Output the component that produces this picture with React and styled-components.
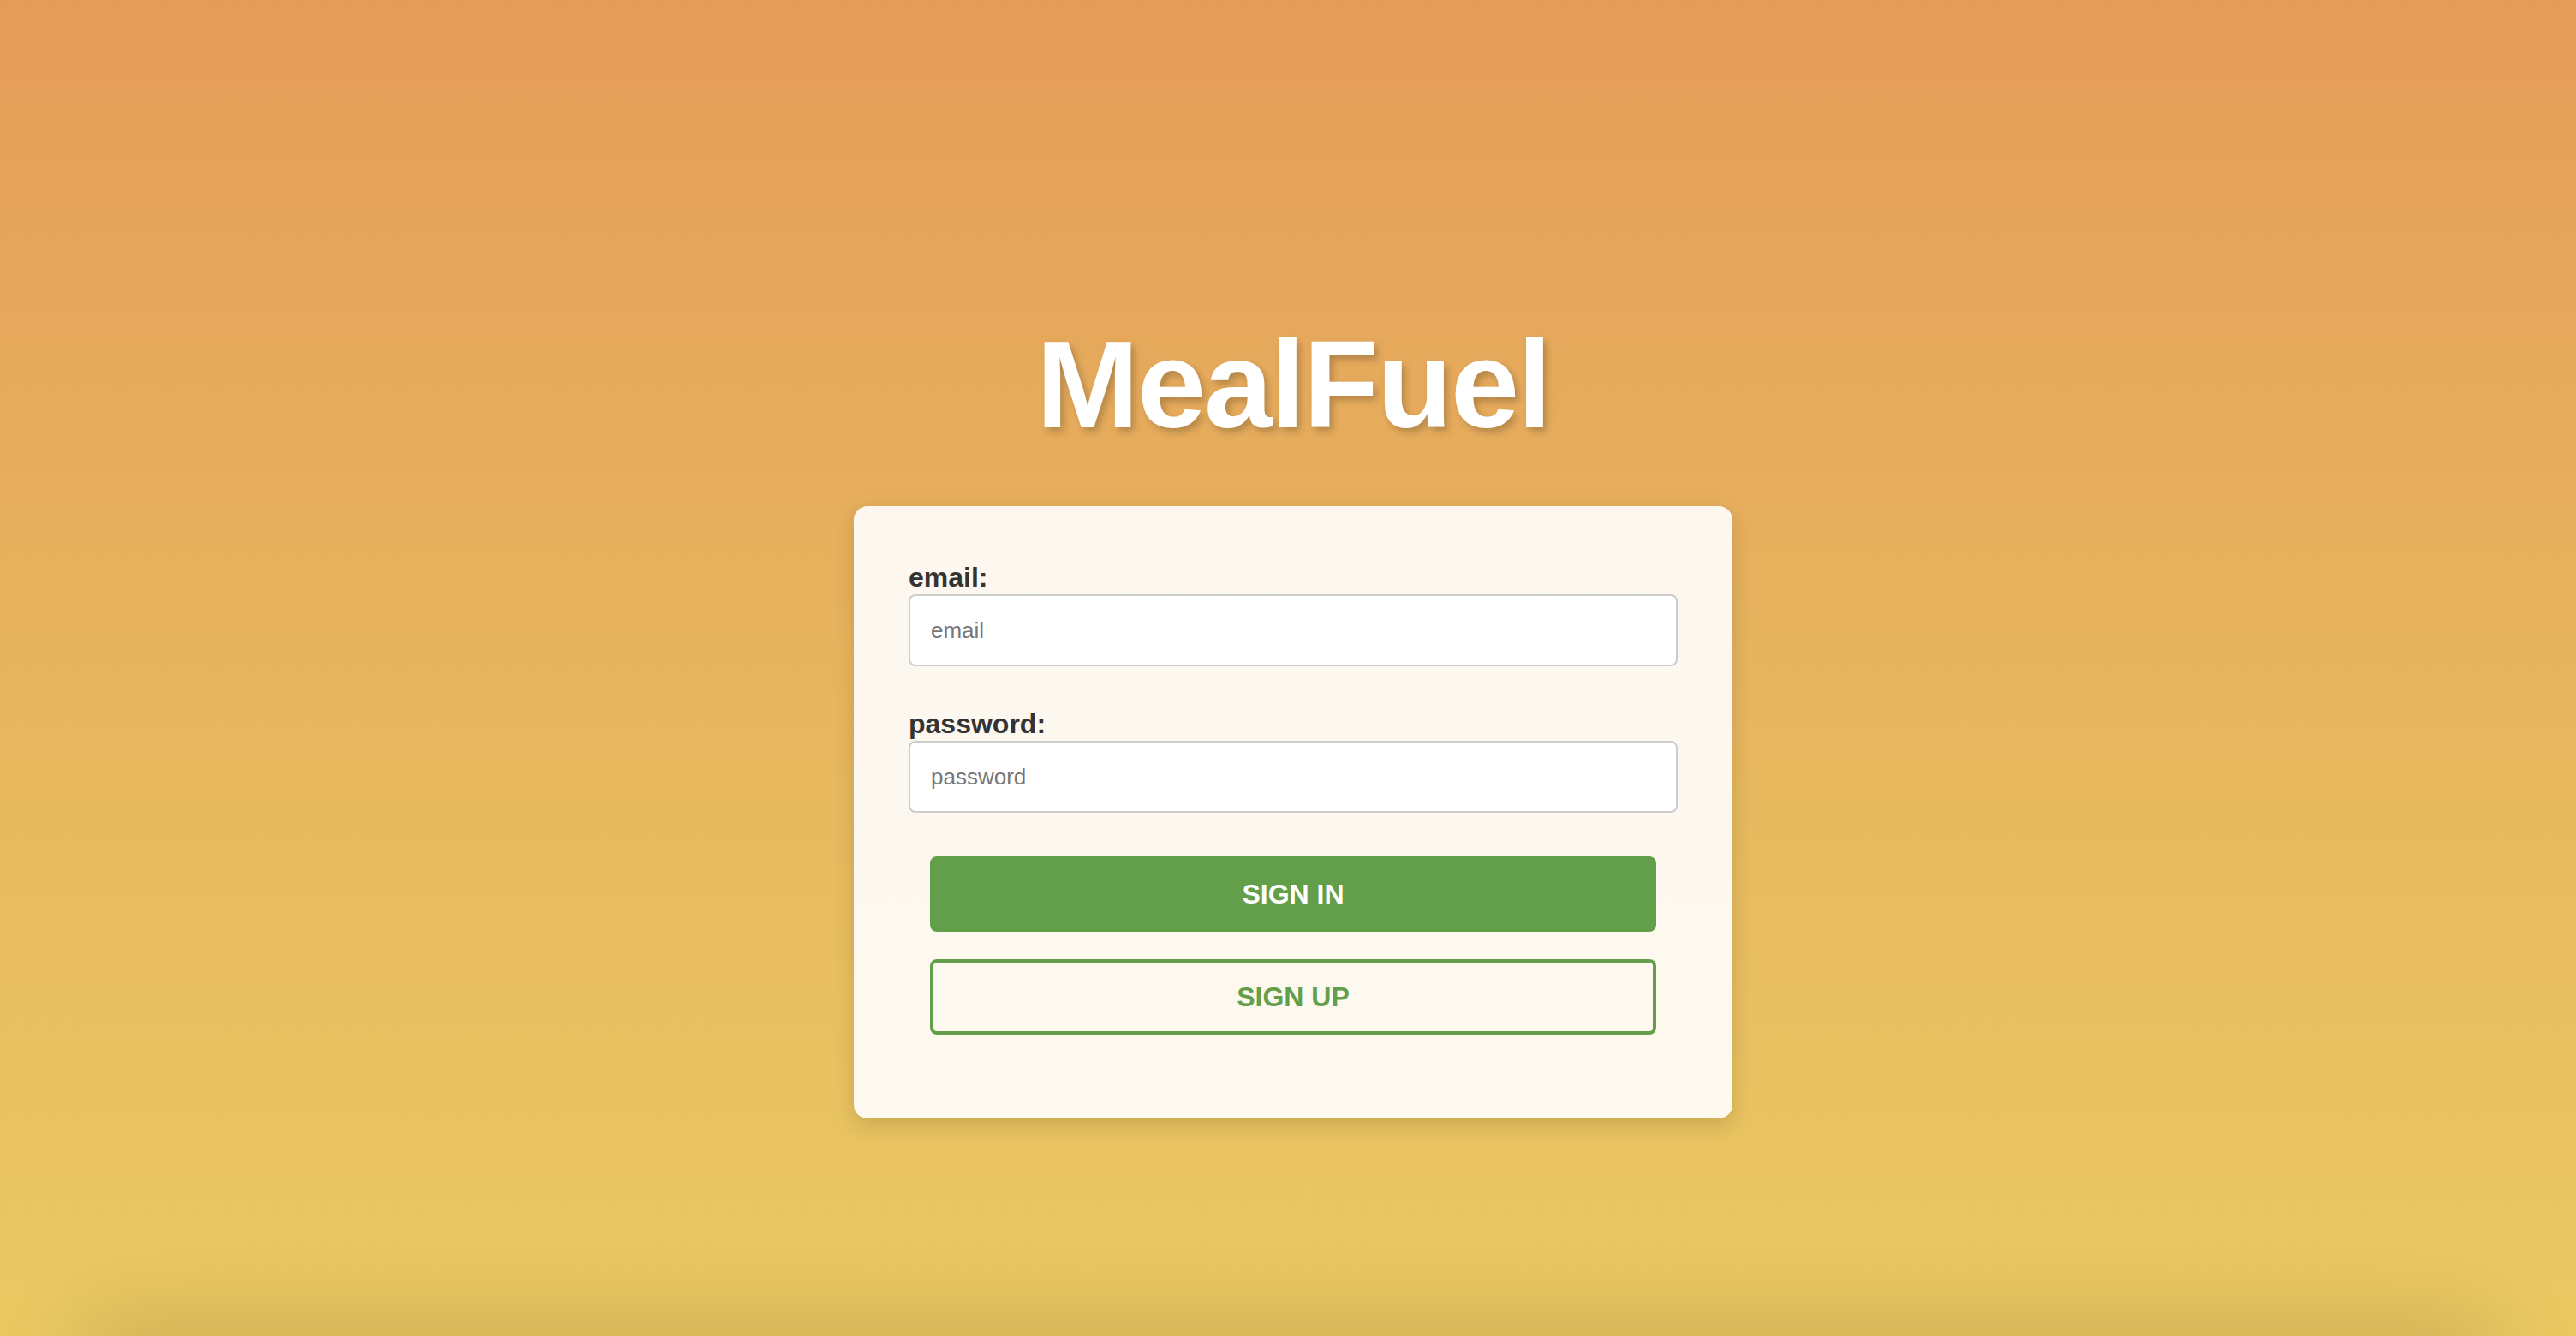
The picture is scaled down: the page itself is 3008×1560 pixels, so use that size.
import styled, { createGlobalStyle } from "styled-components";

const GlobalStyle = createGlobalStyle`
  * {
    box-sizing: border-box;
  }

  html, body {
    margin: 0;
    padding: 0;
  }

  body {
    font-family: "Liberation Sans", Arial, Helvetica, sans-serif;
  }
`;

export default function App() {
  const handleSubmit = (e) => {
    e.preventDefault();
  };

  return (
    <>
      <GlobalStyle />
      <Page>
        <Main>
          <Title>MealFuel</Title>
          <Card>
            <form onSubmit={handleSubmit}>
              <Field>
                <Label htmlFor="email">email:</Label>
                <Input type="email" id="email" placeholder="email" />
              </Field>
              <Field>
                <Label htmlFor="password">password:</Label>
                <Input type="password" id="password" placeholder="password" />
              </Field>
              <Actions>
                <Button type="submit">SIGN IN</Button>
                <Button type="button" $outline>
                  SIGN UP
                </Button>
              </Actions>
            </form>
          </Card>
        </Main>
        <Footer />
      </Page>
    </>
  );
}

const Page = styled.div`
  height: 100vh;
  overflow: hidden;
  display: flex;
  flex-direction: column;
  background: linear-gradient(180deg, #e59c59 0%, #e6ab5c 30%, #e8bb5f 65%, #eac962 100%);
`;

const Main = styled.main`
  flex: 1;
  display: flex;
  flex-direction: column;
  align-items: center;
  padding: 367px 0 0 12px;
`;

const Title = styled.h1`
  margin: 0 0 59px;
  font-size: 144px;
  line-height: 165px;
  font-weight: 700;
  letter-spacing: -2px;
  color: #ffffff;
  text-shadow: 4px 5px 8px rgba(0, 0, 0, 0.22);
`;

const Card = styled.div`
  width: 1026px;
  padding: 64px 64px 98px;
  background-color: rgba(255, 255, 255, 0.9);
  border-radius: 16px;
  box-shadow: 0 8px 24px rgba(0, 0, 0, 0.14);
`;

const Field = styled.div`
  display: flex;
  flex-direction: column;
  gap: 1px;
  margin-bottom: 48px;
`;

const Label = styled.label`
  display: block;
  font-size: 32px;
  line-height: 38px;
  font-weight: 700;
  color: #333333;
`;

const Input = styled.input`
  width: 100%;
  height: 84px;
  padding: 0 24px;
  border: 2px solid #cccccc;
  border-radius: 8px;
  background-color: #ffffff;
  font-family: "Liberation Sans", Arial, sans-serif;
  font-size: 26px;
  color: #333333;

  &::placeholder {
    color: #777777;
  }

  &:focus {
    outline: none;
    border-color: #639e4b;
  }
`;

const Actions = styled.div`
  display: flex;
  flex-direction: column;
  gap: 32px;
  padding: 3px 25px 0;
`;

const Button = styled.button`
  width: 100%;
  height: 88px;
  border-radius: 8px;
  border: 4px solid #639e4b;
  background-color: ${(p) => (p.$outline ? "transparent" : "#639e4b")};
  color: ${(p) => (p.$outline ? "#639e4b" : "#ffffff")};
  font-family: "Liberation Sans", Arial, sans-serif;
  font-size: 32px;
  font-weight: 700;
  cursor: pointer;
`;

const Footer = styled.footer`
  flex-shrink: 0;
  height: 60px;
  margin: 0 100px -60px;
  background-color: #e6c25f;
  box-shadow: 0 0 110px rgba(0, 0, 0, 0.22);
`;
